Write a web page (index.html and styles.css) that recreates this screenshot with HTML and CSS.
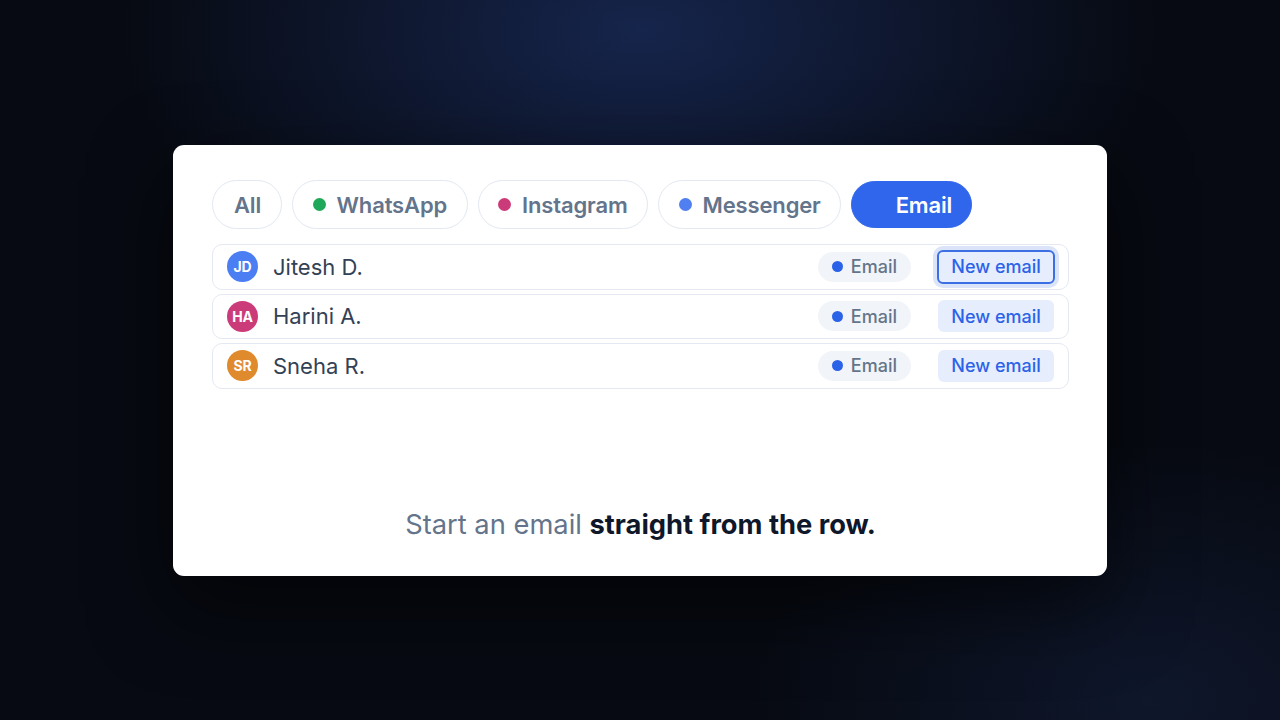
FILE: index.html
```html
<!DOCTYPE html>
<html>
<head>
<meta charset="utf-8">
<link rel="stylesheet" href="styles.css">
</head>
<body>
<div class="stage">
  <div class="card">
    <div class="chips">
      <div class="chip">All</div>
      <div class="chip"><span class="dot green"></span>WhatsApp</div>
      <div class="chip"><span class="dot pink"></span>Instagram</div>
      <div class="chip"><span class="dot blue"></span>Messenger</div>
      <div class="chip active"><span class="dot hidden"></span>Email</div>
    </div>
    <div class="rows">
      <div class="row">
        <span class="avatar av-blue">JD</span>
        <span class="name">Jitesh D.</span>
        <span class="badge"><span class="bdot"></span>Email</span>
        <span class="btn focus">New email</span>
      </div>
      <div class="row">
        <span class="avatar av-pink">HA</span>
        <span class="name">Harini A.</span>
        <span class="badge"><span class="bdot"></span>Email</span>
        <span class="btn">New email</span>
      </div>
      <div class="row">
        <span class="avatar av-orange">SR</span>
        <span class="name">Sneha R.</span>
        <span class="badge"><span class="bdot"></span>Email</span>
        <span class="btn">New email</span>
      </div>
    </div>
    <p class="caption">Start an email <strong>straight from the row.</strong></p>
  </div>
</div>
</body>
</html>
```
FILE: styles.css
```css
* { box-sizing: border-box; }
html, body { margin: 0; height: 100%; }
body {
  font-family: Inter, "Noto Sans", sans-serif;
  background:
    radial-gradient(ellipse 520px 300px at 640px 30px, rgba(28,48,100,0.7), rgba(20,34,72,0) 100%),
    radial-gradient(ellipse 400px 260px at 1150px 700px, rgba(24,38,74,0.45), rgba(20,30,60,0) 100%),
    #070a12;
}
.stage {
  width: 1280px;
  height: 720px;
  display: flex;
  align-items: flex-start;
  justify-content: center;
  padding-top: 145px;
}
.card {
  width: 934px;
  height: 431px;
  background: #fff;
  border-radius: 11px;
  padding: 35px 38px 0 39px;
  display: flex;
  flex-direction: column;
  box-shadow: 0 30px 80px rgba(0,0,0,0.6);
}
.chips {
  display: flex;
  gap: 10px;
  align-items: center;
}
.chip {
  height: 49px;
  border: 1.5px solid #e2e8f0;
  border-radius: 25px;
  padding: 0 19.5px;
  display: flex;
  align-items: center;
  gap: 11px;
  font-size: 22px;
  font-weight: 600;
  color: #64748b;
  letter-spacing: -0.15px;
}
.chip:first-child { padding: 0 20px 0 21px; }
.chip.active {
  background: #2f66eb;
  border-color: #2f66eb;
  color: #fff;
  height: 47px;
  padding: 0 18.5px 0 19.5px;
}
.dot {
  width: 13px;
  height: 13px;
  border-radius: 50%;
}
.green { background: #1fa85a; }
.pink { background: #cc3b79; }
.blue { background: #4f7ff0; }
.hidden { background: transparent; }
.rows {
  margin-top: 15px;
  display: flex;
  flex-direction: column;
  gap: 4px;
  width: 857px;
}
.row {
  height: 45.5px;
  border: 1.5px solid #e4e9f1;
  border-radius: 10px;
  display: flex;
  align-items: center;
  padding: 0 14px 0 14px;
}
.avatar {
  width: 31px;
  height: 31px;
  border-radius: 50%;
  color: #fff;
  font-size: 14px;
  font-weight: 700;
  display: flex;
  align-items: center;
  justify-content: center;
  letter-spacing: -0.2px;
}
.av-blue { background: #4a7ef2; }
.av-pink { background: #cc3b79; }
.av-orange { background: #e08a2e; }
.name {
  margin-left: 15px;
  font-size: 22px;
  color: #334155;
  font-weight: 400;
  flex: 1;
}
.badge {
  height: 30px;
  background: #f1f4f9;
  border-radius: 15px;
  padding: 0 14px 0 14px;
  display: flex;
  align-items: center;
  gap: 8px;
  font-size: 18px;
  font-weight: 500;
  color: #64748b;
}
.bdot {
  width: 11px;
  height: 11px;
  border-radius: 50%;
  background: #2b63e8;
}
.btn {
  margin-left: 27px;
  width: 116px;
  height: 32px;
  background: #e6edfd;
  border-radius: 6px;
  color: #2b63e8;
  font-size: 18px;
  font-weight: 500;
  display: flex;
  align-items: center;
  justify-content: center;
}
.btn.focus {
  width: 118px;
  height: 34px;
  border: 2px solid #3b6fe3;
  box-shadow: 0 0 0 4px #dbe4f8;
  margin-left: 26px;
  margin-right: -1px;
}
.caption {
  margin: auto 0 35px 0;
  text-align: center;
  font-size: 27.3px;
  color: #64748b;
  font-weight: 400;
  letter-spacing: 0;
}
.caption strong {
  color: #0f172a;
  font-weight: 700;
}
```
